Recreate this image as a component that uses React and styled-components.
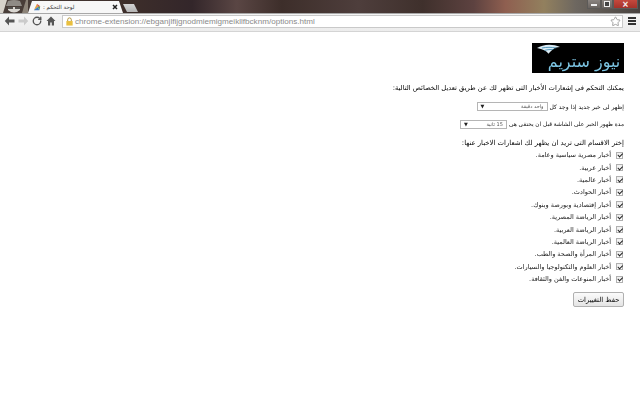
import styled, { createGlobalStyle } from "styled-components";
import { RotateCw, Star } from "lucide-react";

const categories = [
    "أخبار مصرية سياسية وعامة.",
    "أخبار عربية.",
    "أخبار عالمية.",
    "أخبار الحوادث.",
    "أخبار إقتصادية وبورصة وبنوك.",
    "أخبار الرياضة المصرية.",
    "أخبار الرياضة العربية.",
    "أخبار الرياضة العالمية.",
    "أخبار المرأة والصحة والطب.",
    "أخبار العلوم والتكنولوجيا والسيارات.",
    "أخبار المنوعات والفن والثقافة.",
];

export default function App() {
    return (
        <>
            <GlobalStyle />
            <Chrome>
                <TabStrip>
                    <Incognito viewBox="0 0 28 13">
                        <path d="M0 0h7L3 13H0z" fill="#d6d2ca" />
                        <path d="M22 13 26 0h2v13z" fill="#8c8378" />
                        <path d="M6 6h16l-2-5q-6-2-12 0z" fill="#8f8b86" />
                        <path d="M8 7h12v3q-6 5-12 0z" fill="#d9d6d1" />
                        <rect x="8" y="7" width="5" height="2" fill="#55524f" />
                        <rect x="15" y="7" width="5" height="2" fill="#55524f" />
                    </Incognito>
                    <Tab>
                        <Favicon viewBox="0 0 10 10">
                            <path d="M1 9 5 1l1 4z" fill="#e8a33a" />
                            <path d="M5 1l4 3-3 1z" fill="#d0483a" />
                            <path d="M6 5l3-1-1 5z" fill="#4a9a58" />
                            <path d="M1 9l5-4 2 4z" fill="#3c78c0" />
                        </Favicon>
                        <TabTitle dir="rtl">لوحة التحكم :</TabTitle>
                        <TabClose viewBox="0 0 6 6">
                            <path d="M1 1l4 4M5 1 1 5" stroke="#222" strokeWidth="1.5" />
                        </TabClose>
                    </Tab>
                    <NewTab />
                    <WindowButtons>
                        <WinButton $width="14px"><MinGlyph /></WinButton>
                        <WinButton $width="12px"><MaxGlyph /></WinButton>
                        <WinButton $width="25px" $close>×</WinButton>
                    </WindowButtons>
                </TabStrip>
                <Toolbar>
                    <NavIcon>
                        <svg width="11" height="10" viewBox="0 0 11 10"><path d="M5 0.5 0.8 5 5 9.500V6.500h5.500v-3H5z" fill="#555" /></svg>
                    </NavIcon>
                    <NavIcon>
                        <svg width="11" height="10" viewBox="0 0 11 10"><path d="M6 0.5 10.200 5 6 9.500V6.500H0.500v-3H6z" fill="#cbcbcb" /></svg>
                    </NavIcon>
                    <NavIcon><RotateCw size={10} strokeWidth={3.2} /></NavIcon>
                    <NavIcon>
                        <svg width="10" height="10" viewBox="0 0 10 10"><path d="M5 0.500 0.500 5H2v4.500h2.200V6.500h1.600v3H8V5h1.500z" fill="#555" /></svg>
                    </NavIcon>
                    <Omnibox>
                        <Lock viewBox="0 0 10 10">
                            <path d="M3 5V3a2 2 0 0 1 4 0v2" fill="none" stroke="#a98a2c" />
                            <rect x="1.500" y="4.500" width="7" height="5" fill="#e9bf3e" />
                        </Lock>
                        <Url>chrome-extension://ebganjlfijgnodmiemigmeikllfbcknm/options.html</Url>
                        <Star size={11} color="#9a9a9a" />
                    </Omnibox>
                    <Menu><i /><i /><i /></Menu>
                </Toolbar>
            </Chrome>
            <Page dir="rtl">
                <LogoBox>
                    <Feather viewBox="0 0 24 10">
                        <path d="M0 4C6 0 16-1 24 3 18 3 16 6 12 10 10 7 6 5 0 4z" fill="#dcecf5" />
                        <path d="M5 4c5-1 10-1 15 0M8 6.500c3-1 6-1 9-1" stroke="#2a7ea6" strokeWidth="0.8" fill="none" />
                    </Feather>
                    <LogoText>نيوز ستريم</LogoText>
                </LogoBox>
                <Intro>يمكنك التحكم فى إشعارات الأخبار التى تظهر لك عن طريق تعديل الخصائص التالية:</Intro>
                <SettingRow $size="6px">
                    إظهر لى خبر جديد إذا وجد كل
                    <Select $width="71px"><SelectText>واحد دقيقة</SelectText><Arrow>▼</Arrow></Select>
                </SettingRow>
                <SettingRow $size="5.800px">
                    مدة ظهور الخبر على الشاشة قبل ان يختفى هى
                    <Select $width="47px"><SelectText>15 ثانية</SelectText><Arrow>▼</Arrow></Select>
                </SettingRow>
                <Heading>إختر الاقسام التى تريد ان يظهر لك اشعارات الاخبار عنها:</Heading>
                <List>
                    {categories.map((c) => (
                        <Item key={c}>
                            <Check type="checkbox" defaultChecked />
                            {c}
                        </Item>
                    ))}
                </List>
                <Save>حفظ التغييرات</Save>
            </Page>
        </>
    );
}

const GlobalStyle = createGlobalStyle`
    html, body {
        margin: 0;
        height: 100%;
        background: #fff;
        overflow: hidden;
    }
    body {
        font-family: "DejaVu Sans", "Liberation Sans", sans-serif;
    }
`;
const Chrome = styled.div`
    height: 31px;
    display: flex;
    flex-direction: column;
    border-bottom: 1px solid #d4d4d4;
`;
const TabStrip = styled.div`
    height: 13px;
    flex: none;
    display: flex;
    align-items: flex-end;
    background: linear-gradient(90deg, #4a3f3a 0, #3d2e2a 20%, #33262a 30%, #5a4644 37%, #3d2e2a 44%, #4e3e3c 56%, #3f302c 66%, #5d4240 74%, #8f5f50 79%, #92805e 85%, #6d6760 90%, #48423f 100%);
`;
const Incognito = styled.svg`
    width: 28px;
    height: 13px;
    flex: none;
`;
const Tab = styled.div`
    width: 95px;
    height: 12px;
    padding: 0 5px 0 5px;
    box-sizing: border-box;
    display: flex;
    align-items: center;
    gap: 2px;
    background: #f7f7f7;
    clip-path: polygon(0 100%, 4px 0, 91px 0, 100% 100%);
    flex: none;
`;
const Favicon = styled.svg`
    width: 8px;
    height: 8px;
    flex: none;
`;
const TabTitle = styled.span`
    font-size: 5.500px;
    color: #333;
    white-space: nowrap;
`;
const TabClose = styled.svg`
    width: 6px;
    height: 6px;
    margin-left: auto;
    flex: none;
`;
const NewTab = styled.div`
    width: 15px;
    height: 8px;
    margin-bottom: 1px;
    background: linear-gradient(#d4d4d4, #b4b4b4);
    clip-path: polygon(0 0, 11px 0, 100% 100%, 4px 100%);
    flex: none;
`;
const WindowButtons = styled.div`
    display: flex;
    margin-left: auto;
    margin-right: 2px;
    align-self: flex-start;
`;
const WinButton = styled.div`
    width: ${(p) => p.$width};
    height: 9px;
    display: flex;
    align-items: center;
    justify-content: center;
    font-family: "Liberation Sans", sans-serif;
    font-size: 10px;
    font-weight: 700;
    color: #f4e9e6;
    background: ${(p) => (p.$close ? "linear-gradient(#c4493e, #a5322a)" : "linear-gradient(#8a8480, #6a6460)")};
    border: 1px solid #5c5a58;
    border-top: 0;
    box-sizing: border-box;
`;
const MinGlyph = styled.i`
    width: 6px;
    height: 2px;
    margin-top: 2px;
    background: #eee;
`;
const MaxGlyph = styled.i`
    width: 4px;
    height: 4px;
    border: 1px solid #eee;
    background: #444;
`;
const Toolbar = styled.div`
    flex: 1;
    display: flex;
    align-items: center;
    padding: 0 4px 3px 2px;
    background: linear-gradient(#f5f5f5, #ececec);
    border-top: 1px solid #a8a8a8;
`;
const NavIcon = styled.div`
    width: 14px;
    display: flex;
    justify-content: center;
    color: #555;
`;
const Omnibox = styled.div`
    flex: 1;
    height: 11px;
    margin-left: 4px;
    margin-right: 5px;
    padding: 0 1px 0 2px;
    display: flex;
    align-items: center;
    gap: 1px;
    background: #fff;
    border: 1px solid #c9c9c9;
`;
const Lock = styled.svg`
    width: 9px;
    height: 9px;
    flex: none;
`;
const Url = styled.span`
    flex: 1;
    font-size: 8.100px;
    color: #8a8a8a;
    white-space: nowrap;
    font-family: "Liberation Sans", sans-serif;
`;
const Menu = styled.div`
    width: 8px;
    display: flex;
    flex-direction: column;
    gap: 1px;
    i {
        height: 2px;
        background: #333;
    }
`;
const Page = styled.div`
    padding: 11px 16px 0 0;
    display: flex;
    flex-direction: column;
    align-items: flex-start;
    color: #000;
    will-change: transform;
`;
const LogoBox = styled.div`
    width: 92px;
    height: 30px;
    padding-left: 12px;
    box-sizing: border-box;
    background: #000;
    position: relative;
    display: flex;
    align-items: flex-end;
    justify-content: center;
`;
const Feather = styled.svg`
    position: absolute;
    top: 1px;
    left: 5px;
    width: 23px;
    height: 10px;
`;
const LogoText = styled.span`
    font-size: 16px;
    line-height: 22px;
    color: #7cc4e2;
`;
const Intro = styled.div`
    margin-top: 11px;
    line-height: 9px;
    font-size: 6.750px;
    white-space: nowrap;
`;
const SettingRow = styled.div`
    margin-top: 8px;
    height: 10px;
    display: flex;
    align-items: center;
    gap: 2px;
    white-space: nowrap;
    font-size: ${(p) => p.$size};
    color: #111;
`;
const Select = styled.div`
    width: ${(p) => p.$width};
    height: 9px;
    padding: 0 3px;
    display: flex;
    justify-content: space-between;
    align-items: center;
    background: #fff;
    border: 1px solid #b5b5b5;
    box-sizing: border-box;
`;
const SelectText = styled.span`
    font-size: 5px;
    color: #555;
`;
const Arrow = styled.span`
    font-size: 5px;
    color: #222;
`;
const Heading = styled.div`
    margin-top: 10px;
    line-height: 9px;
    font-size: 6.900px;
    white-space: nowrap;
`;
const List = styled.div`
    display: flex;
    flex-direction: column;
    margin-top: 1px;
`;
const Item = styled.label`
    height: 12.400px;
    display: flex;
    align-items: center;
    gap: 5px;
    white-space: nowrap;
    font-size: 6.500px;
    color: #222;
`;
const Check = styled.input`
    appearance: none;
    width: 5px;
    height: 5px;
    margin: 0 1px 0 0;
    position: relative;
    background: linear-gradient(#eee, #fff);
    border: 1px solid #b0b0b0;
    box-sizing: content-box;
    &:checked::after {
        content: "";
        position: absolute;
        left: 1.500px;
        top: -0.500px;
        width: 1.500px;
        height: 3.500px;
        border: solid #222;
        border-width: 0 1px 1px 0;
        transform: rotate(45deg);
    }
`;
const Save = styled.button`
    margin-top: 7px;
    height: 15px;
    width: 51px;
    padding: 0;
    font-family: inherit;
    font-size: 6.800px;
    color: #000;
    background: linear-gradient(#fbfbfb, #e4e4e4);
    border: 1px solid #b0b0b0;
    border-radius: 2px;
`;
